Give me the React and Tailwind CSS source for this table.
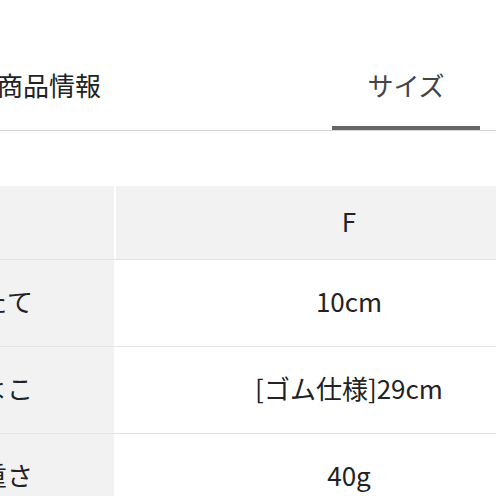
import React from 'react';

const rows = [
  { label: 'たて', value: '10cm' },
  { label: 'よこ', value: '[ゴム仕様]29cm' },
  { label: '重さ', value: '40g' },
];

const font = { fontFamily: '"Noto Sans CJK JP", "Noto Sans", sans-serif' };

const App = () => {
  return (
    <div className="w-[496px] h-[496px] overflow-hidden bg-white text-[#222]" style={font}>
      {/* tabs */}
      <div className="flex h-[131px] border-b border-[#d6d6d6]">
        <div className="ml-[-25px] w-[148px] flex flex-col items-center pt-[65px]">
          <span className="text-[26px] leading-[39px] text-[#222]">商品情報</span>
        </div>
        <div className="ml-[209px] w-[148px] flex flex-col items-center pt-[65px]">
          <span className="text-[26px] leading-[39px] text-[#444]">サイズ</span>
          <div className="mt-[22px] h-[4px] w-full bg-[#666]" />
        </div>
      </div>

      {/* size table */}
      <div className="mt-[55px] ml-[-40px] w-[622px] text-[26px]">
        <div className="grid grid-cols-[154px_466px] gap-x-[2px] h-[73px]">
          <div className="bg-[#f2f2f2]" />
          <div className="bg-[#f2f2f2] flex items-center justify-center pb-[5px]">F</div>
        </div>
        {rows.map((row) => (
          <div
            key={row.label}
            className="grid grid-cols-[154px_466px] gap-x-[2px] h-[87px] border-t border-[#e4e4e4]"
          >
            <div className="bg-[#f2f2f2] flex items-center pl-[21px] pb-[6px]">{row.label}</div>
            <div className="bg-white flex items-center justify-center pb-[6px]">{row.value}</div>
          </div>
        ))}
      </div>
    </div>
  );
};

export default App;
